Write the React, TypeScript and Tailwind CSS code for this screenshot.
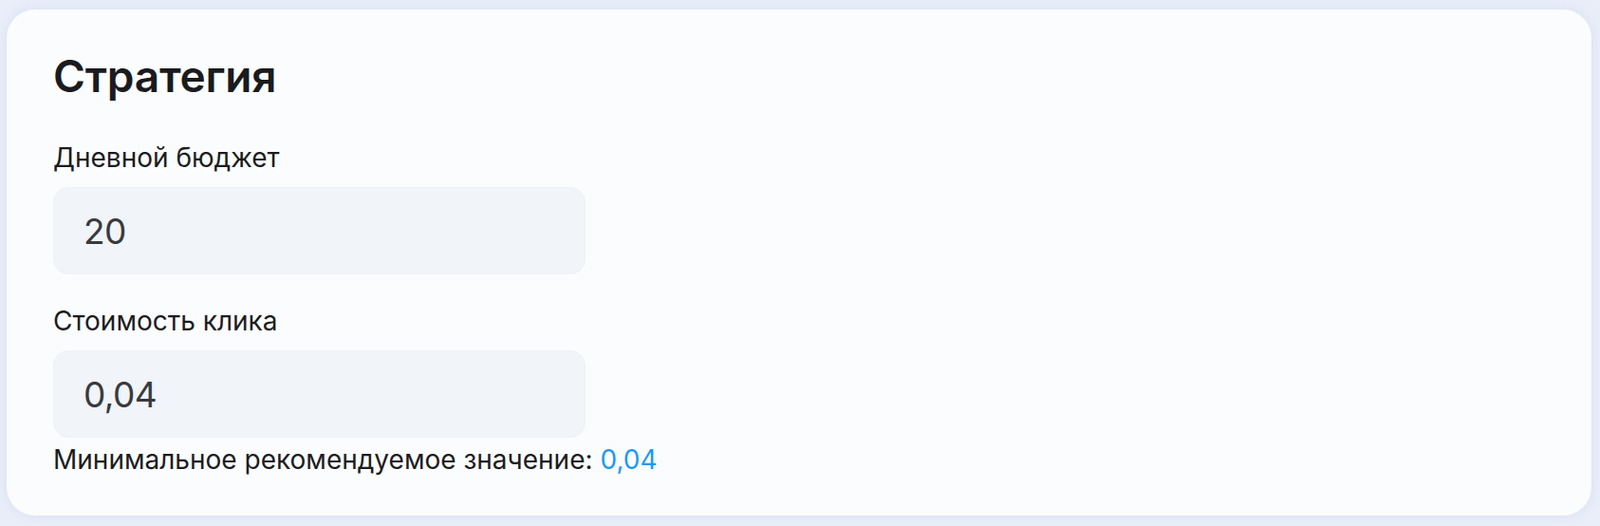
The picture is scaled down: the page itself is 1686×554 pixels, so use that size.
import { useState } from 'react';

function Field({
  label,
  value,
  onChange,
}: {
  label: string;
  value: string;
  onChange: (v: string) => void;
}) {
  return (
    <div className="flex flex-col">
      <label className="text-[28px] leading-[42px] text-[#1c1c1e]">{label}</label>
      <input
        value={value}
        onChange={(e) => onChange(e.target.value)}
        className="mt-[10px] h-[92px] w-[561px] rounded-[16px] border border-[#eef1f6] bg-[#f1f4f8] px-[31px] text-[37px] tracking-[-0.6px] text-[#383a3f] outline-none"
        style={{ fontFamily: 'Inter, "Noto Sans", sans-serif' }}
      />
    </div>
  );
}

export default function App() {
  const [budget, setBudget] = useState('20');
  const [cpc, setCpc] = useState('0,04');

  return (
    <div
      className="min-h-[554px] bg-[#e9eef9] pl-[7px] pr-[9px] pt-[10px] pb-[13px]"
      style={{ fontFamily: 'Inter, "Noto Sans", sans-serif' }}
    >
      <div className="rounded-[30px] bg-[#fbfcfe] pl-[49px] pr-[49px] pt-[43px] pb-[38px] shadow-[0_0_12px_rgba(180,195,230,0.35)]">
        <h2 className="text-[46px] font-semibold leading-[54px] tracking-[-0.2px] text-[#1a1b1e]">
          Стратегия
        </h2>

        <div className="mt-[38px]">
          <Field label="Дневной бюджет" value={budget} onChange={setBudget} />
        </div>

        <div className="mt-[28px]">
          <Field label="Стоимость клика" value={cpc} onChange={setCpc} />
        </div>

        <p className="mt-[2px] text-[28px] leading-[42px] text-[#1c1c1e]">
          Минимальное рекомендуемое значение:{' '}
          <span className="text-[#1d9bf0]">0,04</span>
        </p>
      </div>
    </div>
  );
}
